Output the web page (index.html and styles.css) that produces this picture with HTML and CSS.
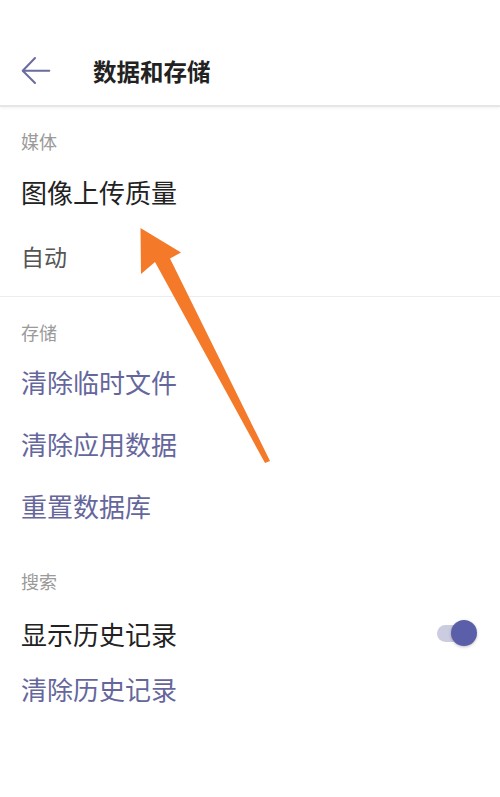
FILE: index.html
```html
<!DOCTYPE html>
<html lang="zh-CN">
<head>
<meta charset="utf-8">
<title>数据和存储</title>
<link rel="stylesheet" href="styles.css">
</head>
<body>
<div class="page">
  <header class="topbar">
    <span class="back">
      <svg width="30" height="30" viewBox="0 0 30 30"><path d="M2.7 14.7H28.3M14 2 1.7 14.7 14 27" fill="none" stroke="#6a6b9e" stroke-width="2" stroke-linecap="round" stroke-linejoin="round"/></svg>
    </span>
    <h1 class="title">数据和存储</h1>
  </header>

  <section class="section first">
    <div class="label">媒体</div>
    <div class="item primary">图像上传质量</div>
    <div class="item sub">自动</div>
  </section>

  <section class="section second">
    <div class="label">存储</div>
    <div class="item link">清除临时文件</div>
    <div class="item link">清除应用数据</div>
    <div class="item link">重置数据库</div>
  </section>

  <section class="section third">
    <div class="label">搜索</div>
    <div class="item primary row">
      <span>显示历史记录</span>
      <span class="toggle"><span class="track"></span><span class="knob"></span></span>
    </div>
    <div class="item link short">清除历史记录</div>
  </section>

  <svg class="annot" width="500" height="797" viewBox="0 0 500 797">
    <polygon points="140.5,228 181,252.5 170,258.5 270,461 265,463 155,262 141,274" fill="#f47a2a"/>
  </svg>
</div>
</body>
</html>
```

FILE: styles.css
```css
* { box-sizing: border-box; }
html, body { margin: 0; padding: 0; background: #fff; }
body {
  font-family: "Noto Sans CJK SC", "Noto Sans", sans-serif;
  color: #222;
}
.page { position: relative; width: 500px; height: 797px; overflow: hidden; }

.topbar {
  height: 107px;
  display: flex;
  align-items: center;
  padding: 36px 0 0 21px;
  border-bottom: 2px solid #e6e6e6;
  box-shadow: 0 1px 3px rgba(0,0,0,0.06);
}
.back { width: 30px; height: 30px; display: block; }
.back svg { display: block; }
.title {
  margin: 0 0 0 42px;
  font-size: 23.5px;
  font-weight: 700;
  color: #222;
  line-height: 30px;
}

.section { padding: 0 21px; }
.first { padding-top: 15px; padding-bottom: 8px; border-bottom: 1px solid #ededed; }
.second { padding-top: 16px; }
.third { padding-top: 25px; }

.label {
  height: 38px;
  line-height: 38px;
  font-size: 18px;
  color: #9a9a9a;
}
.item {
  font-size: 26px;
  height: 62px;
  line-height: 62px;
}
.first .item { height: 64px; line-height: 64px; }
.primary { color: #222; }
.first .sub { color: #555; font-size: 23px; }
.link { color: #65679c; }

.third .row { margin-top: 4px; height: 60px; line-height: 60px; }
.third .short { height: 50px; line-height: 50px; }

.row { display: flex; justify-content: space-between; align-items: center; }
.toggle { position: relative; width: 44px; height: 28px; margin-right: 0; }
.track {
  position: absolute; left: 2px; top: 5px;
  width: 32px; height: 17px; border-radius: 9px;
  background: #cbcce0;
}
.knob {
  position: absolute; left: 16px; top: 0;
  width: 26px; height: 26px; border-radius: 50%;
  background: #5b5ea9;
  box-shadow: 0 1px 3px rgba(0,0,0,0.25);
}

.annot { position: absolute; left: 0; top: 0; pointer-events: none; }
```
